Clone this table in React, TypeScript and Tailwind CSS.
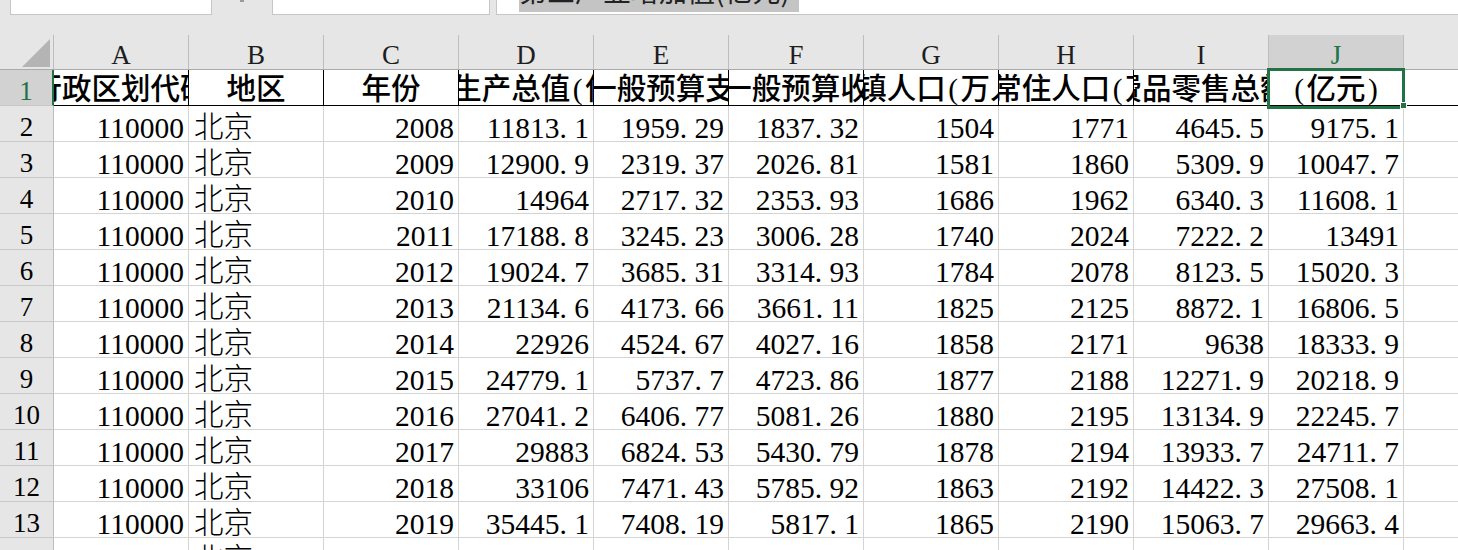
import React from "react";

const letters = ["A", "B", "C", "D", "E", "F", "G", "H", "I", "J"];

const heads = [
  "行政区划代码",
  "地区",
  "年份",
  "地区生产总值(亿元)",
  "地方财政一般预算支出(亿元)",
  "地方财政一般预算收入(亿元)",
  "城镇人口(万人)",
  "年末常住人口(万人)",
  "社会消费品零售总额(亿元)",
  "(亿元)",
];

const data = [
  ["2008", "11813.1", "1959.29", "1837.32", "1504", "1771", "4645.5", "9175.1"],
  ["2009", "12900.9", "2319.37", "2026.81", "1581", "1860", "5309.9", "10047.7"],
  ["2010", "14964", "2717.32", "2353.93", "1686", "1962", "6340.3", "11608.1"],
  ["2011", "17188.8", "3245.23", "3006.28", "1740", "2024", "7222.2", "13491"],
  ["2012", "19024.7", "3685.31", "3314.93", "1784", "2078", "8123.5", "15020.3"],
  ["2013", "21134.6", "4173.66", "3661.11", "1825", "2125", "8872.1", "16806.5"],
  ["2014", "22926", "4524.67", "4027.16", "1858", "2171", "9638", "18333.9"],
  ["2015", "24779.1", "5737.7", "4723.86", "1877", "2188", "12271.9", "20218.9"],
  ["2016", "27041.2", "6406.77", "5081.26", "1880", "2195", "13134.9", "22245.7"],
  ["2017", "29883", "6824.53", "5430.79", "1878", "2194", "13933.7", "24711.7"],
  ["2018", "33106", "7471.43", "5785.92", "1863", "2192", "14422.3", "27508.1"],
  ["2019", "35445.1", "7408.19", "5817.1", "1865", "2190", "15063.7", "29663.4"],
];

// half-width punctuation gets a full half-em cell, like the sheet font does
const Txt = ({ s }: { s: string }) => (
  <>
    {Array.from(s).map((c, i) =>
      c === "." ? (
        <span key={i} className="inline-block w-[14.75px] text-left">.</span>
      ) : c === "(" || c === ")" ? (
        <span key={i} className="inline-block w-[14.75px] text-center">{c}</span>
      ) : (
        <React.Fragment key={i}>{c}</React.Fragment>
      )
    )}
  </>
);

const TopBar = () => (
  <div className="flex h-[15px] items-stretch">
    <div className="ml-[10px] w-[202px] bg-white border-x border-b border-[#c6c6c6] overflow-hidden">
      <div className="-mt-[20px] pl-[6px] font-['Liberation_Sans',sans-serif] text-[24px] leading-[24px] text-[#333]">J1</div>
    </div>
    <div className="ml-[28px] w-[4px] h-[2px] bg-[#9a9a9a]" />
    <div className="ml-[28px] w-[218px] bg-white border-x border-b border-[#c6c6c6] overflow-hidden">
      <div className="-mt-[20px] flex items-end h-[22px] font-['Liberation_Sans',sans-serif] text-[24px] leading-[24px] text-[#666]">
        <span className="ml-[26px]">✕</span>
        <span className="ml-[50px]">✓</span>
        <span className="ml-[48px] italic">fx</span>
      </div>
    </div>
    <div className="ml-[6px] flex-1 bg-white border-l border-b border-[#c6c6c6] overflow-hidden">
      <div className="ml-[22px] w-[280px] h-[12px] bg-[#c4c4c4] overflow-hidden">
        <div className="-mt-[25px] whitespace-nowrap font-['Noto_Sans_CJK_SC',sans-serif] text-[28px] leading-[30px] text-[#222]">
          第三产业增加值(亿元)
        </div>
      </div>
    </div>
  </div>
);

const App = () => {
  return (
    <div className="w-[1458px] h-[550px] overflow-hidden bg-[#e6e6e6] text-black font-['Liberation_Serif','Noto_Sans_CJK_SC',serif]">
      <TopBar />
      <div className="h-[20px]" />

      <div className="relative">
        {/* column letters */}
        <div className="flex h-[35px] border-b border-[#ababab]">
          <div className="relative w-[54px] shrink-0 border-r border-[#bdbdbd]">
            <svg width="54" height="34" className="absolute left-0 top-0">
              <polygon points="50,4 50,32 22,32" fill="#b4b4b4" />
            </svg>
          </div>
          {letters.map((l) => (
            <div
              key={l}
              className={
                l === "J"
                  ? "w-[135px] shrink-0 border-r border-[#bdbdbd] bg-[#d2d2d2] text-[#217346] text-center text-[27px] leading-[35px] pt-[3px]"
                  : "w-[135px] shrink-0 border-r border-[#bdbdbd] text-[#1e1e1e] text-center text-[27px] leading-[35px] pt-[3px]"
              }
            >
              {l}
            </div>
          ))}
          <div className="flex-1" />
        </div>

        {/* header row 1 */}
        <div className="flex h-[36px] bg-white">
          <div className="w-[54px] shrink-0 h-[36px] bg-[#d2d2d2] border-r-2 border-r-[#217346] border-b border-b-[#c8c8c8] text-center text-[27px] leading-[36px] pt-[3px] text-[#217346]">
            1
          </div>
          {heads.map((h, i) => (
            <div
              key={i}
              className="w-[135px] shrink-0 h-[36px] flex justify-center overflow-hidden whitespace-nowrap border-r border-b border-black text-[29.5px] leading-[36px] pt-[1px] font-medium"
            >
              <span className="shrink-0">
                <Txt s={h} />
              </span>
            </div>
          ))}
          <div className="flex-1 h-[36px] border-b border-black" />
        </div>

        {/* data rows */}
        {data.map((r, idx) => (
          <div key={idx} className="flex h-[36px] bg-white">
            <div className="w-[54px] shrink-0 h-[36px] bg-[#e6e6e6] border-r border-r-[#bdbdbd] border-b border-b-[#c8c8c8] text-center text-[27px] leading-[36px] pt-[3px]">
              {idx + 2}
            </div>
            <div className="w-[135px] shrink-0 h-[36px] border-r border-b border-[#d4d4d4] text-right pr-[4px] text-[29.5px] leading-[36px] pt-[4px]">
              110000
            </div>
            <div className="w-[135px] shrink-0 h-[36px] border-r border-b border-[#d4d4d4] pl-[5px] text-[29.5px] leading-[36px] pt-[3px] font-light">
              北京
            </div>
            {r.map((v, j) => (
              <div
                key={j}
                className="w-[135px] shrink-0 h-[36px] border-r border-b border-[#d4d4d4] text-right pr-[4px] text-[29.5px] leading-[36px] pt-[4px] whitespace-nowrap"
              >
                <Txt s={v} />
              </div>
            ))}
            <div className="flex-1 h-[36px] border-b border-[#d4d4d4]" />
          </div>
        ))}

        {/* row 14, cut off by the window */}
        <div className="flex h-[36px] bg-white">
          <div className="w-[54px] shrink-0 h-[36px] bg-[#e6e6e6] border-r border-r-[#bdbdbd] text-center text-[27px] leading-[36px] pt-[3px]">
            14
          </div>
          <div className="w-[135px] shrink-0 h-[36px] border-r border-[#d4d4d4]" />
          <div className="w-[135px] shrink-0 h-[36px] border-r border-[#d4d4d4] pl-[5px] text-[29.5px] leading-[36px] pt-[3px] font-light">
            北京
          </div>
          {letters.slice(2).map((l) => (
            <div key={l} className="w-[135px] shrink-0 h-[36px] border-r border-[#d4d4d4]" />
          ))}
          <div className="flex-1" />
        </div>

        {/* selected cell J1 */}
        <div className="absolute left-[1267px] top-[33px] w-[138px] h-[41px] border-[3px] border-[#217346]" />
        <div className="absolute left-[1400px] top-[67px] w-[7px] h-[7px] bg-[#217346] border border-white" />
      </div>
    </div>
  );
};

export default App;
